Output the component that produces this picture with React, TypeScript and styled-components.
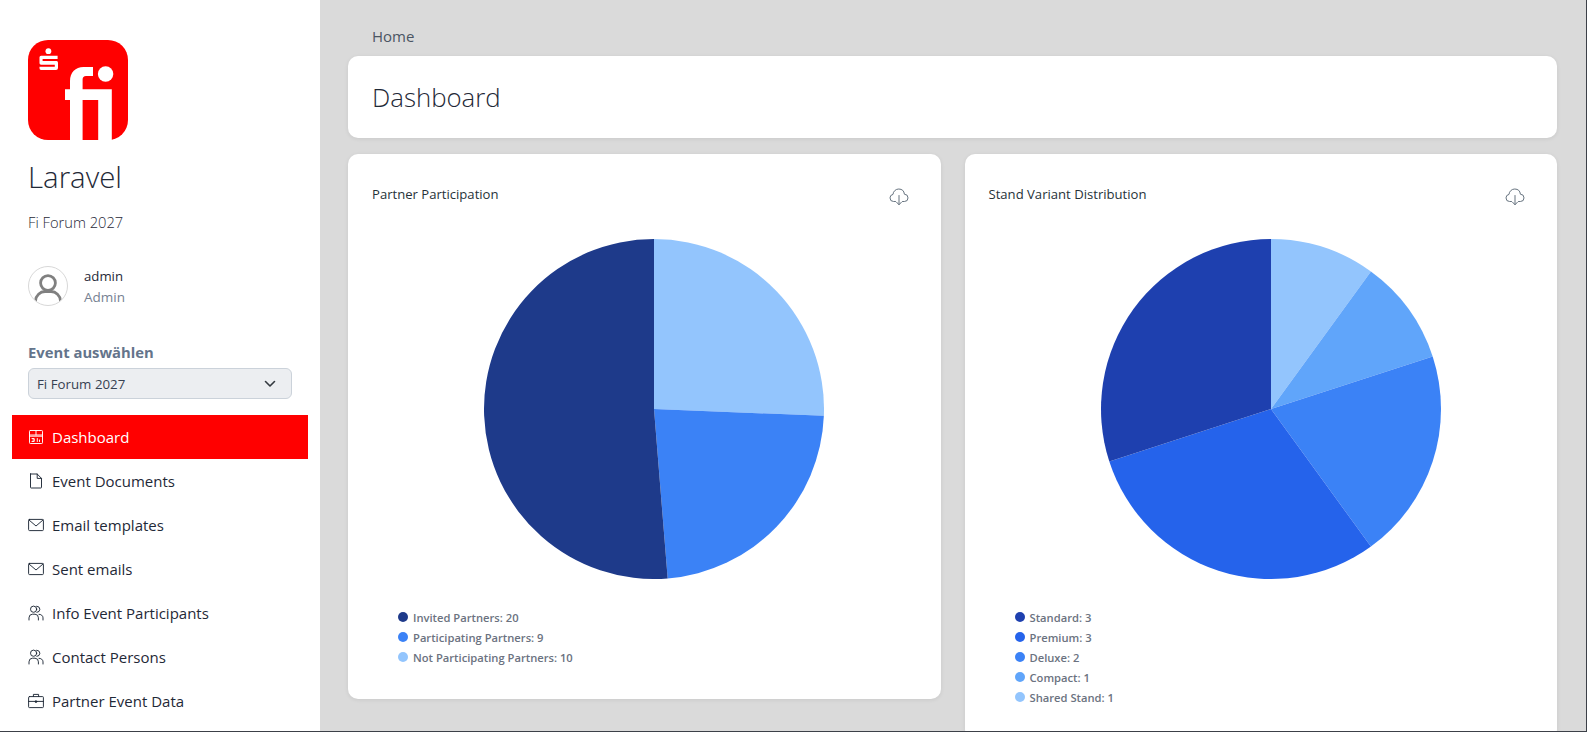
import React from "react";
import styled, { createGlobalStyle } from "styled-components";

const FONT = `"Open Sans", "Noto Sans", "Liberation Sans", sans-serif`;

const Global = createGlobalStyle`
  html, body { margin: 0; padding: 0; height: 732px; overflow: hidden; background: #dadada; }
  * { box-sizing: border-box; }
`;

const Frame = styled.div`
  display: flex;
  width: 1587px;
  height: 732px;
  overflow: hidden;
  background: #dadada;
  border-right: 1px solid #3c4048;
  border-bottom: 1px solid #3c4048;
  font-family: ${FONT};
  color: #1f2937;
`;

const Sidebar = styled.aside`
  flex: 0 0 320px;
  background: #fff;
  padding: 40px 12px 0;
`;

const Brand = styled.div`
  padding: 0 16px;
`;

const BrandName = styled.h1`
  margin: 16px 0 0;
  font-size: 29.4px;
  line-height: 42px;
  font-weight: 300;
  color: #1f2937;
`;

const EventName = styled.div`
  margin-top: 14px;
  font-size: 14.7px;
  line-height: 20px;
  font-weight: 300;
  color: #1f2937;
`;

const UserRow = styled.div`
  display: flex;
  align-items: center;
  gap: 16px;
  height: 40px;
  margin-top: 34px;
`;

const Avatar = styled.div`
  flex: 0 0 40px;
  height: 40px;
  border: 1px solid #d8d8d8;
  border-radius: 50%;
  display: flex;
  align-items: flex-end;
  justify-content: center;
  padding-bottom: 3px;
  overflow: hidden;
`;

const UserText = styled.div`
  display: flex;
  flex-direction: column;
  gap: 2px;
  padding-top: 2px;
`;

const UserName = styled.span`
  font-size: 13.2px;
  line-height: 19px;
  color: #1f2937;
`;

const UserRole = styled.span`
  font-size: 13.5px;
  line-height: 19px;
  color: #768192;
`;

const SelectLabel = styled.div`
  margin-top: 36px;
  font-size: 14.8px;
  line-height: 20px;
  font-weight: 700;
  color: #64748b;
`;

const SelectBox = styled.div`
  margin-top: 6px;
  height: 31px;
  display: flex;
  align-items: center;
  justify-content: space-between;
  padding: 0 15px 0 8px;
  background: #eceef1;
  border: 1px solid #cbd2da;
  border-radius: 6px;
  font-size: 13.3px;
  color: #374151;
`;

const Nav = styled.nav`
  display: flex;
  flex-direction: column;
  margin-top: 16px;
`;

const NavItem = styled.a<{ $active?: boolean }>`
  display: flex;
  align-items: center;
  height: 44px;
  padding-left: 16px;
  gap: 8px;
  font-size: 15px;
  color: ${(p) => (p.$active ? "#fff" : "#1f2937")};
  background: ${(p) => (p.$active ? "#ff0000" : "transparent")};
`;

const IconSlot = styled.span`
  flex: 0 0 16px;
  height: 16px;
  display: flex;
  align-items: center;
  justify-content: center;
`;

const Main = styled.main`
  flex: 1;
  min-width: 0;
  padding: 25px 29px 0 28px;
`;

const Breadcrumb = styled.div`
  padding-left: 24px;
  height: 23px;
  line-height: 23px;
  font-size: 15px;
  color: #4b5563;
`;

const TitleCard = styled.div`
  margin-top: 8px;
  height: 82px;
  padding: 0 24px;
  display: flex;
  align-items: center;
  background: #fff;
  border-radius: 10px;
  box-shadow: 0 1px 4px rgba(0, 0, 0, 0.08);
`;

const PageTitle = styled.h2`
  margin: 0;
  font-size: 25.8px;
  font-weight: 300;
  color: #1f2937;
`;

const Charts = styled.div`
  display: grid;
  grid-template-columns: 1fr 1fr;
  gap: 24px;
  align-items: start;
  margin-top: 16px;
`;

const ChartCard = styled.section`
  background: #fff;
  border-radius: 10px;
  padding: 24px 24px 0;
  box-shadow: 0 1px 4px rgba(0, 0, 0, 0.08);
`;

const ChartHeader = styled.header`
  display: flex;
  justify-content: space-between;
  height: 61px;
  padding: 4px 8px 0 0;
`;

const ChartTitle = styled.h3`
  margin: 0;
  font-size: 13.1px;
  line-height: 24px;
  font-weight: 400;
  color: #263238;
`;

const PieWrap = styled.div`
  padding-left: 112px;
  height: 340px;
  line-height: 0;
`;

const Legend = styled.ul`
  list-style: none;
  margin: 28px 0 0;
  padding: 0 0 32px 26px;
`;

const LegendRow = styled.li`
  display: flex;
  align-items: center;
  gap: 5px;
  height: 20px;
  font-size: 11.2px;
  font-weight: 600;
  color: #6b7280;
`;

const Dot = styled.span<{ $color: string }>`
  width: 10px;
  height: 10px;
  border-radius: 50%;
  background: ${(p) => p.$color};
`;

const CloudBtn = styled.span`
  display: flex;
  margin-top: 6px;
`;

type Datum = { label: string; value: number; color: string };

function Pie({ data }: { data: Datum[] }) {
  const total = data.reduce((s, d) => s + d.value, 0);
  const R = 170;
  let angle = 0;
  // clockwise from the top, drawn in reverse order of the legend
  const slices = [...data].reverse().map((d) => {
    const a0 = angle;
    const a1 = angle + (d.value / total) * Math.PI * 2;
    angle = a1;
    const x0 = R + R * Math.sin(a0);
    const y0 = R - R * Math.cos(a0);
    const x1 = R + R * Math.sin(a1);
    const y1 = R - R * Math.cos(a1);
    const large = a1 - a0 > Math.PI ? 1 : 0;
    return (
      <path
        key={d.label}
        d={`M${R} ${R}L${x0} ${y0}A${R} ${R} 0 ${large} 1 ${x1} ${y1}Z`}
        fill={d.color}
      />
    );
  });
  return (
    <svg width={340} height={340} viewBox="0 0 340 340">
      {slices}
    </svg>
  );
}

const stroke = {
  fill: "none",
  stroke: "currentColor",
  strokeWidth: 0.95,
  strokeLinecap: "round" as const,
  strokeLinejoin: "round" as const,
};

const DashIcon = () => (
  <svg width="16" height="16" viewBox="0 0 16 16" {...stroke}>
    <rect x="1.5" y="1.5" width="13" height="13" rx="0.8" />
    <path d="M1.5 6h13M8 1.5V6" />
    <path d="M1.5 7.2h13" />
    <path d="M4 9.5h2.2v3H4M6.2 11H4.8M9.3 9.5v3M11.5 11v1.5" />
  </svg>
);

const DocIcon = () => (
  <svg width="16" height="16" viewBox="0 0 16 16" {...stroke}>
    <path d="M2.5 1h6.7l4.3 4.4v9a.6.6 0 0 1-.6.6H3.1a.6.6 0 0 1-.6-.6V1z" />
    <path d="M9.2 1v4.4h4.3" />
  </svg>
);

const MailIcon = () => (
  <svg width="16" height="16" viewBox="0 0 16 16" {...stroke}>
    <rect x="0.6" y="2.4" width="14.8" height="11.2" rx="1" />
    <path d="M1 3l7 6 7-6" />
  </svg>
);

const UsersIcon = () => (
  <svg width="16" height="16" viewBox="0 0 16 16" {...stroke}>
    <circle cx="5.6" cy="4.2" r="3.1" />
    <path d="M1 15v-2.2a3.6 3.6 0 0 1 3.4-3.6h2.6a3.6 3.6 0 0 1 3.4 3.6V15" />
    <path d="M8.6 1.2a3.3 3.3 0 0 1 3.3 3 3.3 3.3 0 0 1-3 3.2" />
    <path d="M11 9.3a3.6 3.6 0 0 1 4 3.5V15" />
  </svg>
);

const CaseIcon = () => (
  <svg width="16" height="16" viewBox="0 0 16 16" {...stroke}>
    <rect x="0.6" y="3.6" width="14.8" height="11" rx="0.8" />
    <path d="M5.4 3.6V1.4h5.2v2.2M0.6 8.4h14.8" />
    <circle cx="8" cy="8.6" r="0.9" fill="currentColor" />
  </svg>
);

const CloudIcon = () => (
  <svg width="20" height="18" viewBox="0 0 20 18" fill="none" stroke="#66737f" strokeWidth="1" strokeLinecap="round" strokeLinejoin="round">
    <path d="M6.5 13.5H4.6A3.6 3.6 0 0 1 1 9.9a3.6 3.6 0 0 1 3-3.5A5.8 5.8 0 0 1 9.8 1a5.8 5.8 0 0 1 5.6 5.2 3.7 3.7 0 0 1 3.6 3.7 3.6 3.6 0 0 1-3.6 3.6h-1.9" />
    <path d="M10 7.5v9M7.6 14.2L10 16.8l2.4-2.6" />
  </svg>
);

const ChevronIcon = () => (
  <svg width="12" height="8" viewBox="0 0 12 8" fill="none" stroke="#343a40" strokeWidth="1.6" strokeLinecap="round" strokeLinejoin="round">
    <path d="M1.5 1.5L6 6l4.5-4.5" />
  </svg>
);

const PersonIcon = () => (
  <svg width="28" height="28" viewBox="0 0 28 28" fill="none" stroke="#808080" strokeWidth="2.8" style={{ display: "block" }}>
    <circle cx="14" cy="9" r="7.4" />
    <path d="M1.6 28v-1.5A9.5 9.5 0 0 1 11 17.5h6a9.5 9.5 0 0 1 9.4 9V28" />
  </svg>
);

const Logo = () => (
  <svg width="100" height="100" viewBox="0 0 100 100" style={{ display: "block" }}>
    <rect width="100" height="100" rx="20" fill="#ff0000" />
    <circle cx="20.4" cy="11.2" r="2.9" fill="#fff" />
    <path
      d="M11.5 17.3a1.6 1.6 0 0 1 1.6-1.6H29.6v3.4H14.6v2H28.6a1.6 1.6 0 0 1 1.4 1.6v5.2a2 2 0 0 1-2 2H13a1.6 1.6 0 0 1-1.5-1.6v-1.6H26.8v-2H13a1.6 1.6 0 0 1-1.5-1.5z"
      fill="#fff"
    />
    <path
      d="M42 100V60H37V49.2h5V41c0-8.5 5.5-14 13.5-14H65v9H58c-2.2 0-3.4 1.3-3.4 3.5V49.2H83.8V100H70.2V60H54.6V100z"
      fill="#fff"
    />
    <circle cx="77.6" cy="34" r="7.7" fill="#fff" />
  </svg>
);

const partners: Datum[] = [
  { label: "Invited Partners: 20", value: 20, color: "#1e3a8a" },
  { label: "Participating Partners: 9", value: 9, color: "#3b82f6" },
  { label: "Not Participating Partners: 10", value: 10, color: "#93c5fd" },
];

const stands: Datum[] = [
  { label: "Standard: 3", value: 3, color: "#1e40af" },
  { label: "Premium: 3", value: 3, color: "#2563eb" },
  { label: "Deluxe: 2", value: 2, color: "#3b82f6" },
  { label: "Compact: 1", value: 1, color: "#60a5fa" },
  { label: "Shared Stand: 1", value: 1, color: "#93c5fd" },
];

const navItems = [
  { label: "Dashboard", icon: <DashIcon />, active: true },
  { label: "Event Documents", icon: <DocIcon /> },
  { label: "Email templates", icon: <MailIcon /> },
  { label: "Sent emails", icon: <MailIcon /> },
  { label: "Info Event Participants", icon: <UsersIcon /> },
  { label: "Contact Persons", icon: <UsersIcon /> },
  { label: "Partner Event Data", icon: <CaseIcon /> },
];

function ChartBody({ title, data }: { title: string; data: Datum[] }) {
  return (
    <>
      <ChartHeader>
        <ChartTitle>{title}</ChartTitle>
        <CloudBtn>
          <CloudIcon />
        </CloudBtn>
      </ChartHeader>
      <PieWrap>
        <Pie data={data} />
      </PieWrap>
      <Legend>
        {data.map((d) => (
          <LegendRow key={d.label}>
            <Dot $color={d.color} />
            {d.label}
          </LegendRow>
        ))}
      </Legend>
    </>
  );
}

export default function App() {
  return (
    <>
      <Global />
      <Frame>
        <Sidebar>
          <Brand>
            <Logo />
            <BrandName>Laravel</BrandName>
            <EventName>Fi Forum 2027</EventName>
            <UserRow>
              <Avatar>
                <PersonIcon />
              </Avatar>
              <UserText>
                <UserName>admin</UserName>
                <UserRole>Admin</UserRole>
              </UserText>
            </UserRow>
            <SelectLabel>Event auswählen</SelectLabel>
            <SelectBox>
              Fi Forum 2027
              <ChevronIcon />
            </SelectBox>
          </Brand>
          <Nav>
            {navItems.map((n) => (
              <NavItem key={n.label} $active={n.active}>
                <IconSlot>{n.icon}</IconSlot>
                {n.label}
              </NavItem>
            ))}
          </Nav>
        </Sidebar>
        <Main>
          <Breadcrumb>Home</Breadcrumb>
          <TitleCard>
            <PageTitle>Dashboard</PageTitle>
          </TitleCard>
          <Charts>
            <ChartCard>
              <ChartBody title="Partner Participation" data={partners} />
            </ChartCard>
            <ChartCard>
              <ChartBody title="Stand Variant Distribution" data={stands} />
            </ChartCard>
          </Charts>
        </Main>
      </Frame>
    </>
  );
}
